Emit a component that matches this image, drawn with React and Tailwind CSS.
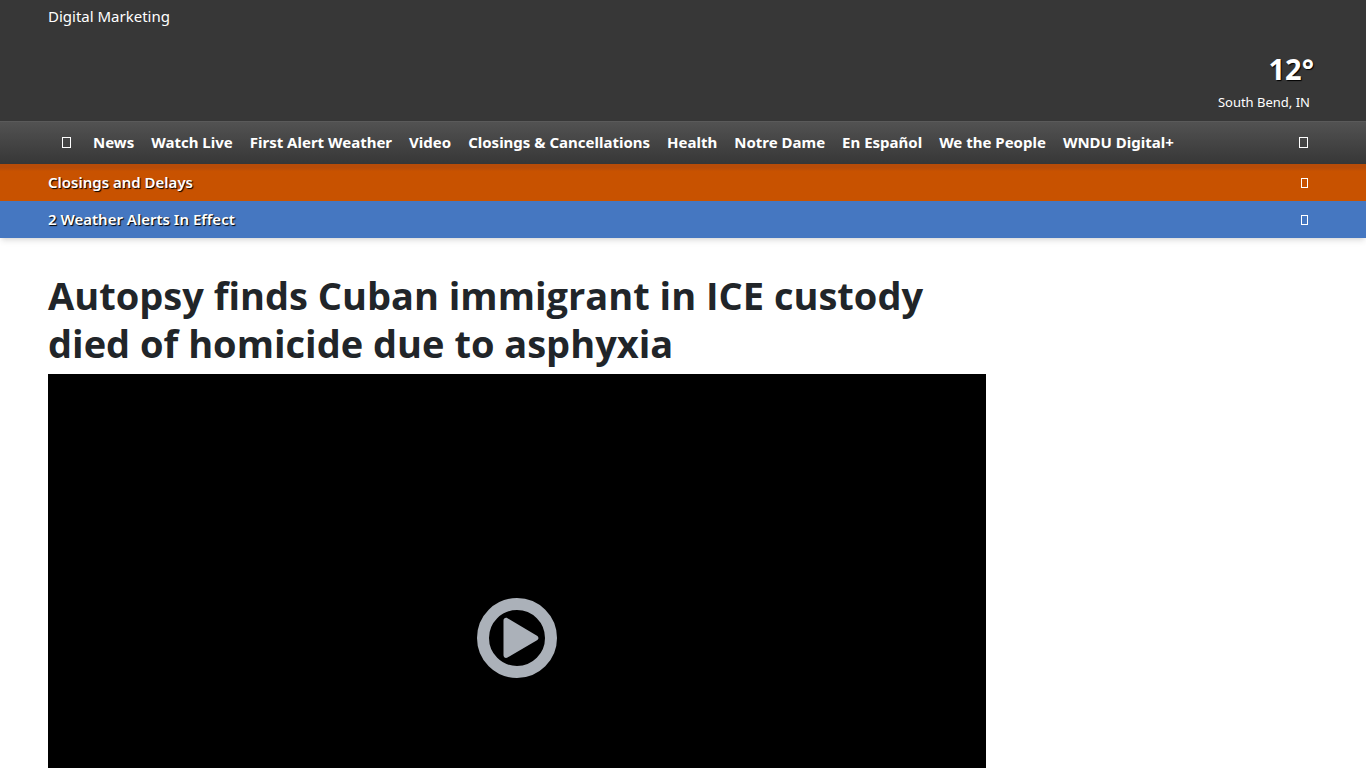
import { clsx } from 'clsx';

const navItems = [
  'News',
  'Watch Live',
  'First Alert Weather',
  'Video',
  'Closings & Cancellations',
  'Health',
  'Notre Dame',
  'En Español',
  'We the People',
  'WNDU Digital+',
];

const alerts = [
  { label: 'Closings and Delays', bg: 'bg-linear-to-b from-[#b84c08] from-10% to-[#c85200] to-20%' },
  { label: '2 Weather Alerts In Effect', bg: 'bg-[#4577c1]' },
];

// Empty glyph box
function Glyph({ className }) {
  return <span aria-hidden="true" className={clsx('block border border-white', className)} />;
}

function PlayIcon() {
  return (
    <svg viewBox="0 0 80 80" className="size-20" aria-hidden="true">
      <circle cx="40" cy="40" r="34" fill="none" stroke="#abb1b9" strokeWidth="12" />
      <path
        d="M26.5 22.5c0-2.2 2.2-3.4 4-2.3l29.5 17.5c1.9 1.1 1.9 3.5 0 4.6L30.500 59.500c-1.800 1.100-4-.1-4-2.300z"
        fill="#abb1b9"
      />
    </svg>
  );
}

export default function App() {
  return (
    <div className="min-h-screen bg-white font-['Segoe_UI','Open_Sans',sans-serif] text-[#212529]">
      <header className="font-['Segoe_UI','Noto_Sans',sans-serif] shadow-md">
        {/* Top bar */}
        <div className="bg-[#373737] px-12 pt-1 text-white">
          <a href="#" className="block w-fit text-[15px] leading-6">Digital Marketing</a>
          <div className="flex flex-col items-end pt-[23px] pb-1">
            <a href="#" className="pr-1 text-[29px] leading-9 font-bold text-shadow-[1px_1px_1px_#000]">12°</a>
            <a href="#" className="pr-2 text-[13px] leading-[30px]">South Bend, IN</a>
          </div>
        </div>

        {/* Main menu */}
        <nav className="flex items-center justify-between border-t border-[#5a5a5a] bg-linear-to-b from-[#525252] to-[#373737] px-12 pb-0.5 text-white">
          <div className="flex items-center">
            <a href="#" aria-label="Home" className="px-3.5">
              <Glyph className="h-[11px] w-[9px]" />
            </a>
            <ul className="flex gap-px">
              {navItems.map((item) => (
                <li key={item}>
                  <a href="#" className="block px-2 text-[15px] leading-10 font-bold whitespace-nowrap">{item}</a>
                </li>
              ))}
            </ul>
          </div>
          <button type="button" aria-label="Search" className="px-2.5">
            <Glyph className="h-[11px] w-[9px]" />
          </button>
        </nav>

        {/* Alert bars */}
        {alerts.map((alert) => (
          <div key={alert.label} className={clsx('flex items-center justify-between px-12 text-white', alert.bg)}>
            <a href="#" className="text-[15px] leading-[37px] font-semibold text-shadow-[1px_1px_1px_#000]">{alert.label}</a>
            <button type="button" aria-label={`Open ${alert.label}`} className="px-2.5">
              <Glyph className="h-[10px] w-[7px]" />
            </button>
          </div>
        ))}
      </header>

      <main className="flex gap-8 px-12 pt-[33px]">
        <article className="min-w-0 flex-1">
          <h1 className="mb-[7px] text-[38px] leading-12 font-bold">
            Autopsy finds Cuban immigrant in ICE custody died of homicide due to asphyxia
          </h1>
          <div className="flex aspect-video items-center justify-center bg-black">
            <button type="button" aria-label="Play video">
              <PlayIcon />
            </button>
          </div>
        </article>
        <aside className="w-[300px] shrink-0" />
      </main>
    </div>
  );
}
